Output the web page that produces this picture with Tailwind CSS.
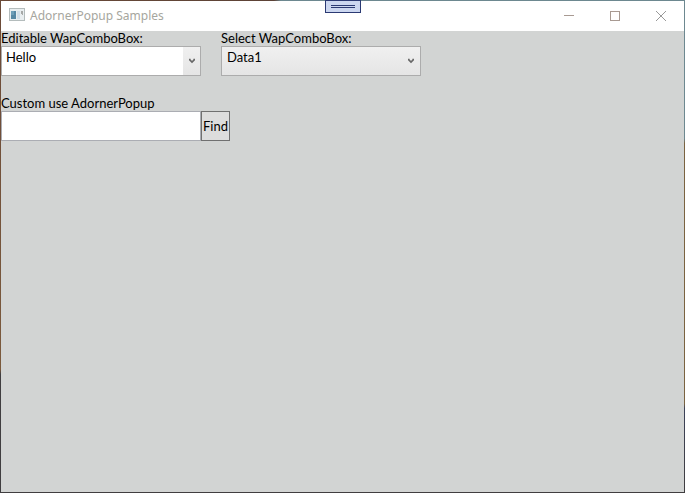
<!DOCTYPE html>
<html lang="en">
<head>
  <meta charset="UTF-8">
  <meta name="viewport" content="width=device-width, initial-scale=1.0">
  <title>AdornerPopup Samples</title>
  <script src="https://cdn.jsdelivr.net/npm/@tailwindcss/browser@4"></script>
</head>
<body class="h-screen overflow-hidden bg-[#403e40] font-['Lato',sans-serif] text-[13px] leading-[15px] text-black">

  <!-- Desktop edge around the window -->
  <div class="h-full flex flex-col bg-[linear-gradient(to_right,#6b4a38_0%,#5c4236_40%,#6d8890_41%,#6d8890_100%)] pt-px">
    <div class="flex-1 flex bg-[linear-gradient(to_bottom,#6b4a38_0%,#7b5a3c_75%,#403e40_76%)] pl-px">
      <div class="flex-1 flex bg-[linear-gradient(to_bottom,#6d8890_0%,#6d8890_28%,#7a6340_29%,#7a6340_82%,#3c4258_83%,#403e40_100%)] pr-px">

        <!-- Window -->
        <div class="flex-1 flex flex-col bg-[#d2d4d3]">
          <header class="flex h-[30px] items-center bg-white pl-2">
            <svg class="w-4 h-4" viewBox="0 0 16 16" shape-rendering="crispEdges">
              <rect x="0" y="0" width="16" height="13" fill="#b4bcbc"/>
              <rect x="1" y="1" width="14" height="11" fill="#e9eef0"/>
              <rect x="2" y="3" width="5" height="8" fill="#5788a4"/>
              <rect x="2" y="3" width="3" height="4" fill="#6f9fb9"/>
              <rect x="8" y="3" width="3" height="8" fill="#d3dfe8"/>
              <rect x="12" y="3" width="2" height="3" fill="#a7a9a8"/>
              <rect x="13" y="6" width="1" height="1" fill="#a7a9a8"/>
            </svg>
            <h1 class="flex-1 pl-[5px] font-['Noto_Sans',sans-serif] text-xs text-[#a6a69e]">AdornerPopup Samples</h1>
            <button class="flex w-[46px] h-full items-center justify-center" aria-label="Minimize">
              <svg class="w-[10px] h-[10px]" viewBox="0 0 10 10" shape-rendering="crispEdges"><path d="M0 4h10v1H0z" fill="#a89a92"/></svg>
            </button>
            <button class="flex w-[46px] h-full items-center justify-center" aria-label="Maximize">
              <svg class="w-[10px] h-[10px]" viewBox="0 0 10 10" shape-rendering="crispEdges"><path d="M.5 .5h9v9h-9z" fill="none" stroke="#a89a92"/></svg>
            </button>
            <button class="flex w-[46px] h-full items-center justify-center" aria-label="Close">
              <svg class="w-[10px] h-[10px]" viewBox="0 0 10 10"><path d="M0 0l10 10M10 0L0 10" fill="none" stroke="#999" /></svg>
            </button>
          </header>

          <main class="flex flex-col gap-5">
            <div class="flex gap-5">
              <div class="w-[200px]">
                <label for="editable" class="block">Editable WapComboBox:</label>
                <div class="flex h-[30px] border border-[#acacac] bg-white">
                  <input id="editable" type="text" value="Hello" class="min-w-0 flex-1 pl-1 pb-[7px] outline-none">
                  <button class="flex w-[17px] items-center justify-center bg-linear-to-b from-[#f0f0f0] to-[#e5e5e5]" aria-label="Open list">
                    <svg class="w-[6px] h-[6px]" viewBox="0 0 6 6"><path d="M.8 .8v1L3 4l2.2-2.2v-1" fill="none" stroke="#686868" stroke-width="1.6"/></svg>
                  </button>
                </div>
              </div>
              <div class="w-[200px]">
                <label for="data" class="block">Select WapComboBox:</label>
                <div class="relative">
                  <select id="data" class="block w-full h-[30px] appearance-none border border-[#acacac] bg-linear-to-b from-[#f0f0f0] to-[#e5e5e5] pl-[5px] pb-[7px] outline-none">
                    <option>Data1</option>
                  </select>
                  <svg class="pointer-events-none absolute right-[7px] top-3 w-[6px] h-[6px]" viewBox="0 0 6 6"><path d="M.8 .8v1L3 4l2.2-2.2v-1" fill="none" stroke="#686868" stroke-width="1.6"/></svg>
                </div>
              </div>
            </div>

            <div>
              <label for="custom" class="block">Custom use AdornerPopup</label>
              <div class="flex h-[30px]">
                <input id="custom" type="text" class="w-[200px] border border-[#abadb3] bg-white px-1 outline-none">
                <button class="border border-[#707070] bg-[#dddddd] px-px">Find</button>
              </div>
            </div>
          </main>
        </div>
      </div>
    </div>
    <div class="h-px bg-[#403e40]"></div>
  </div>

  <!-- Debug toolbar handle -->
  <button class="absolute top-0 left-1/2 -ml-[18px] flex h-[13px] w-9 flex-col items-center justify-center gap-px border border-[#2b3a73] bg-[#ccd7f0]" aria-label="Toolbar">
    <span class="h-px w-6 bg-[#2b3a73]"></span>
    <span class="h-px w-6 bg-[#2b3a73]"></span>
  </button>

</body>
</html>
